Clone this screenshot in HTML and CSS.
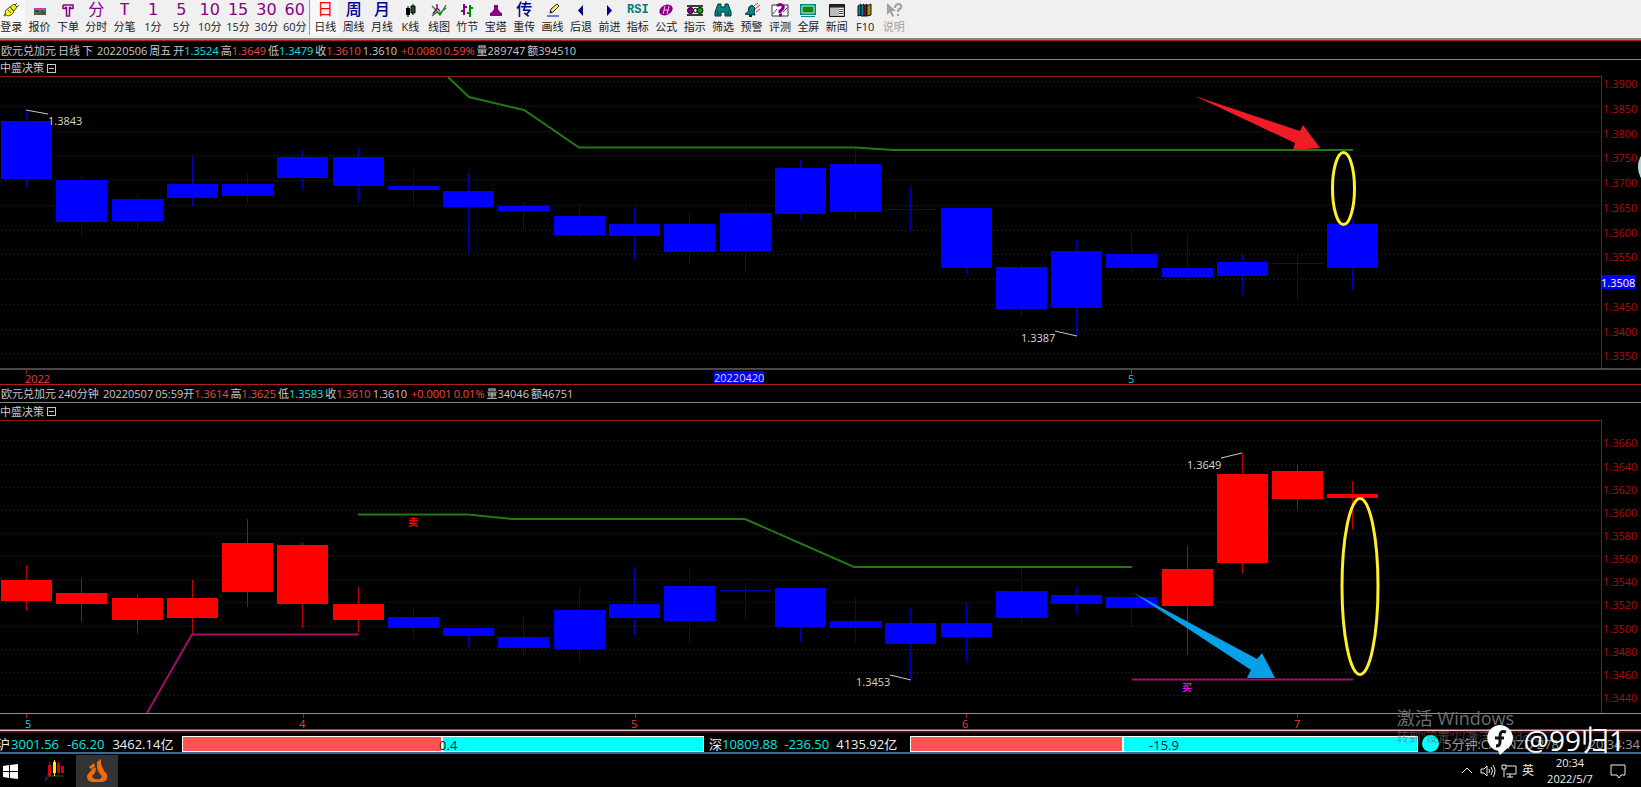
FILE: index.html
```html
<!DOCTYPE html>
<html lang="zh-CN">
<head>
<meta charset="utf-8">
<title>欧元兑加元</title>
<link rel="stylesheet" href="styles.css">
</head>
<body>
<nav class="toolbar">
  <div class="tools tools-period">
    <button class="tool tool-hot"><svg class="icon" viewBox="0 0 18 16"><path d="M2 14l3-3" stroke="#666" stroke-width="2"/><path d="M4 8l4-3 4 5-3 3-3 1-3-2z" fill="#ff0" stroke="#553"/><path d="M8 5l4-3 3 3-3 4z" fill="#ee0" stroke="#553"/><path d="M13 3l2-2M15 5l2-2M6 8l3 3" stroke="#553"/></svg>登录</button>
    <button class="tool"><svg class="icon" viewBox="0 0 18 16"><path d="M3 6h12v7H3z" fill="#555"/><path d="M3 6h12v2H3z" fill="#c3c"/><path d="M4 11h3l2-2 2 1 3-2" stroke="#2b2" fill="none"/><path d="M5 9l3 1M10 9l3 2" stroke="#222"/></svg>报价</button>
    <button class="tool"><svg class="icon" viewBox="0 0 18 16"><path d="M4 3h10v3.500h-2.500V4.500M4 3v3.500h2.500V4.500M7.500 5v9h3V5" fill="none" stroke="#808" stroke-width="1.500"/></svg>下单</button>
    <button class="tool"><span class="glyph">分</span>分时</button>
    <button class="tool"><span class="glyph glyph-serif">T</span>分笔</button>
    <button class="tool"><span class="glyph">1</span>1分</button>
    <button class="tool"><span class="glyph">5</span>5分</button>
    <button class="tool"><span class="glyph">10</span>10分</button>
    <button class="tool"><span class="glyph">15</span>15分</button>
    <button class="tool"><span class="glyph">30</span>30分</button>
    <button class="tool"><span class="glyph">60</span>60分</button>
  </div>
  <div class="tools tools-view">
    <button class="tool tool-hot"><span class="glyph red">日</span>日线</button>
    <button class="tool"><span class="glyph navy">周</span>周线</button>
    <button class="tool"><span class="glyph navy">月</span>月线</button>
    <button class="tool"><svg class="icon" viewBox="0 0 18 16"><path d="M7 4v11M12 2v11" stroke="#000"/><path d="M5 6h4v7H5z" fill="#000"/><path d="M10 4h4v7h-4z" fill="#252" stroke="#000"/></svg>K线</button>
    <button class="tool"><svg class="icon" viewBox="0 0 18 16"><path d="M2 4l4 4 4 5 6-10M2 14l5-4 3 1 6-5" fill="none" stroke="#282" stroke-width="1.4"/><path d="M3 12l4-6 3 3M7 2v5" fill="none" stroke="#808" stroke-width="1.4"/></svg>线图</button>
    <button class="tool"><svg class="icon" viewBox="0 0 18 16"><path d="M6 2v11M6 9H3M6 5h3" stroke="#808" stroke-width="2" fill="none"/><path d="M12 3v12M12 6h3M12 11H9" stroke="#080" stroke-width="2" fill="none"/></svg>竹节</button>
    <button class="tool"><svg class="icon" viewBox="0 0 18 16"><path d="M7 3h4v4l2 3 2 1v3H3v-3l2-1 2-3z" fill="#808"/></svg>宝塔</button>
    <button class="tool"><span class="glyph navy">传</span>重传</button>
    <button class="tool"><svg class="icon" viewBox="0 0 18 16"><path d="M6 11l1-4 6-5 2 2-6 6z" fill="#fe6" stroke="#222"/><path d="M6 11l2-1-1-1z" fill="#000"/><path d="M3 14h12" stroke="#44c" stroke-width="1.4"/></svg>画线</button>
    <button class="tool"><svg class="icon" viewBox="0 0 18 16"><path d="M11 3v11L6 8.500z" fill="#008"/></svg>后退</button>
    <button class="tool"><svg class="icon" viewBox="0 0 18 16"><path d="M7 3v11l5-5.500z" fill="#008"/></svg>前进</button>
    <button class="tool"><span class="glyph glyph-rsi">RSI</span>指标</button>
    <button class="tool"><svg class="icon" viewBox="0 0 18 16"><ellipse cx="9" cy="8" rx="7" ry="5" transform="rotate(-25 9 8)" fill="#808"/><path d="M8 4L6 12M12 4l-2 8M7 8h5" stroke="#fbf" fill="none"/></svg>公式</button>
    <button class="tool"><svg class="icon" viewBox="0 0 18 16"><path d="M1 4h16M1 13h16" stroke="#000" stroke-width="1.500"/><circle cx="4.500" cy="8.500" r="3" fill="#808" stroke="#000"/><circle cx="9.500" cy="8.500" r="2" fill="#fff" stroke="#000"/><circle cx="14" cy="8.500" r="3" fill="#0a0" stroke="#000"/></svg>指示</button>
    <button class="tool"><svg class="icon" viewBox="0 0 18 16"><path d="M4 2h3v3h4V2h3l3 8v4h-6v-4H7v4H1v-4z" fill="#088" stroke="#033"/><path d="M4 9v4M14 9v4" stroke="#033"/></svg>筛选</button>
    <button class="tool"><svg class="icon" viewBox="0 0 18 16"><path d="M2 12l3-2 1-5 3-2 3 3-1 4 1 3z" fill="#088" stroke="#033"/><path d="M6 14h3" stroke="#033" stroke-width="2"/><path d="M11 4l4-3M12 7l5-4M13 10l4-3" stroke="#e33"/></svg>预警</button>
    <button class="tool"><svg class="icon" viewBox="0 0 18 16"><path d="M1 3h16v11H1z" fill="#fff" stroke="#333"/><path d="M2 12l4-5M12 10l5-5" stroke="#44a"/><path d="M6 4q3-3 6 0 1 3-3 5v2M8 13h3" stroke="#808" stroke-width="3" fill="none"/></svg>评测</button>
    <button class="tool"><svg class="icon" viewBox="0 0 18 16"><path d="M1 2h16v11H1z" fill="#088"/><path d="M3 4h12v7H3z" fill="#181" stroke="#cec"/><path d="M2 14.500h14" stroke="#088"/></svg>全屏</button>
    <button class="tool"><svg class="icon" viewBox="0 0 18 16"><path d="M1.500 2.500h15v12h-15z" fill="#bbb" stroke="#111"/><path d="M2 4h14" stroke="#222" stroke-width="3"/><path d="M11 6h4v7h-4z" fill="#fff"/><path d="M11 7.500h4M11 9.500h4M11 11.500h4" stroke="#e00"/></svg>新闻</button>
    <button class="tool"><svg class="icon" viewBox="0 0 18 16"><g stroke="#111"><path d="M2 4l3-2v11l-3 1z" fill="#088"/><path d="M5 4l3-2v12H5z" fill="#08a"/><path d="M8 4l3-2v12H8z" fill="#a02"/><path d="M11 4l4-2v11l-4 1z" fill="#991"/></g></svg>F10</button>
    <button class="tool" disabled><svg class="icon" viewBox="0 0 18 16"><path d="M2 1v12l3-3 2 5 2-1-2-5h4z" fill="#a0a0a0"/><path d="M10 6q0-4 4-4 3 1 2 4-3 1-3 4M13 12v2" stroke="#a0a0a0" stroke-width="2" fill="none"/></svg>说明</button>
  </div>
</nav>

<main>
<section class="panel">
  <header class="quote">
    <span>欧元兑加元</span><span>日线</span><span>下</span><span class="change">20220506</span><span>周五</span>
    <span>开<b class="down">1.3524</b></span><span>高<b class="up">1.3649</b></span><span>低<b class="down">1.3479</b></span><span>收<b class="up">1.3610</b></span><span>1.3610</span>
    <span class="up change">+0.0080</span><span class="up">0.59%</span><span>量289747</span><span>额394510</span>
  </header>
  <div class="indicator">中盛决策 <button class="fold" aria-label="折叠"></button></div>
  <svg class="chart" id="daily" viewBox="0 76 1641 308">
    <g class="grid"></g>
    <path class="frame" d="M0 76.500H1601.500V369"/>
    <g class="candles"></g>
    <path class="sell-line" d="M448 77L469 97 524 110 579 147.500H855L893 150H1353"/>
    <path class="leader" d="M26 110L48 114M1055 331L1077 336"/>
    <text class="mark" x="48" y="125">1.3843</text>
    <text class="mark" x="1021" y="342">1.3387</text>
    <path class="arrow-red" d="M1195 96L1300 131 1303 125 1320 148 1293 150 1295 143z"/>
    <ellipse class="ring" cx="1343.500" cy="188.500" rx="11" ry="36"/>
    <ellipse cx="1646" cy="167" rx="8" ry="14" fill="#b5d8d4"/>
    <path class="base" d="M0 369H1641"/>
    <path class="tick" d="M26.500 370v4M1131.500 370v4"/>
    <text class="up-t" x="25" y="383">2022</text>
    <rect class="flag" x="714" y="371" width="50" height="12"/>
    <text class="mark" x="714" y="382">20220420</text>
    <text class="down-t" x="1128" y="383">5</text>
    <rect class="flag" x="1602" y="275" width="33" height="14"/>
    <text class="flag-t" x="1601" y="287">1.3508</text>
  </svg>
</section>

<section class="panel">
  <header class="quote">
    <span>欧元兑加元</span><span>240分钟</span><span class="change">20220507</span>
    <span>05:59开<b class="up">1.3614</b></span><span>高<b class="up">1.3625</b></span><span>低<b class="down">1.3583</b></span><span>收<b class="up">1.3610</b></span><span>1.3610</span>
    <span class="up change">+0.0001</span><span class="up">0.01%</span><span>量34046</span><span>额46751</span>
  </header>
  <div class="indicator">中盛决策 <button class="fold" aria-label="折叠"></button></div>
  <svg class="chart" id="h4" viewBox="0 420 1641 309">
    <g class="grid"></g>
    <path class="frame" d="M0 420.500H1601.500V713"/>
    <g class="candles"></g>
    <path class="sell-line" d="M358 514.500H468L512 519H745L854 567H1132"/>
    <path class="buy-line" d="M147 713L192 634.500H359M1132 679.500H1353"/>
    <path class="leader" d="M1221 458L1242 453M890 675L911 680"/>
    <text class="mark" x="1187" y="469">1.3649</text>
    <text class="mark" x="856" y="686">1.3453</text>
    <text class="sell-t" x="408" y="526">卖</text>
    <text class="buy-t" x="1182" y="691">买</text>
    <path class="arrow-blue" d="M1132 592L1257 659 1262 653 1275 678H1247L1251 670z"/>
    <ellipse class="ring" cx="1360" cy="586.500" rx="18" ry="88"/>
    <path class="base" d="M0 713.500H1641"/>
    <path class="tick" d="M26.500 714v4M303.500 714v4M635.500 714v4M966.500 714v4M1297.500 714v4"/>
    <text class="down-t" x="25" y="728">5</text>
    <text class="up-t" x="299" y="728">4</text>
    <text class="up-t" x="631" y="728">5</text>
    <text class="up-t" x="962" y="728">6</text>
    <text class="up-t" x="1294" y="728">7</text>
  </svg>
</section>
</main>

<footer class="status">
  <div class="index"><span class="market">沪</span><span class="down">3001.56</span><span class="down">-66.20</span><span>3462.14亿</span></div>
  <div class="meter meter-sh"><i class="bull"></i><i class="bear"></i><span class="meter-value">0.4</span></div>
  <div class="index index-sz"><span>深<b class="down">10809.88</b></span><span class="down">-236.50</span><span>4135.92亿</span></div>
  <div class="meter meter-sz"><i class="bull"></i><i class="bear"></i><span class="meter-value">-15.9</span></div>
  <div class="lamp"></div>
  <div class="ticker">5分钟:CADNZD 278</div>
  <div class="time">20:34:34</div>
  <div class="activate"><p>激活 Windows</p><small>转到"设置"以激活 Windows。</small></div>
  <div class="brand"><svg class="brand-logo" viewBox="0 0 28 32"><path d="M14 1a13 13 0 0 1 6 24.500L14 31l-2-4.200A13 13 0 0 1 14 1z" fill="#fff"/><path d="M20 8q-6-2-6 4v6q0 4-4 4M9 14h9" fill="none" stroke="#111" stroke-width="3"/></svg>@99归1</div>
</footer>

<div class="taskbar">
  <button class="task" aria-label="开始"><svg viewBox="0 0 16 16"><path d="M0 3l6-1v6H0zM7 2l8-1v7H7zM0 9h6v6l-6-1zM7 9h8v7l-8-1z" fill="#fff"/></svg></button>
  <button class="task task-k" aria-label="行情"><svg viewBox="0 0 20 22"><path d="M4 5h3v11H4zM13 4h3v8h-3zM17 6h3v7h-3z" fill="#d00"/><path d="M9 2h3v11H9z" fill="#fe0"/><path d="M5.500 2v15M14.500 2v12" stroke="#d00"/><path d="M10.500 0v16" stroke="#fe0"/><path d="M1 21l5-5h13" stroke="#0a0" stroke-dasharray="2 1" fill="none"/><path d="M1 19l3-4" stroke="#22c"/></svg></button>
  <button class="task task-on" aria-label="火焰"><svg viewBox="0 0 22 24"><path d="M11 3l4-3v5l3 7q4 3 3 7-1 4-6 4H6q-5-1-5-5 0-3 4-6l1-2 3-2 1 2-1 4q-3 2-3 4 2 3 8 2 3-2 1-4-3-3-4-7z" fill="#f86a08"/><path d="M3 8l5-4 1 3-4 3z" fill="#f86a08"/></svg></button>
  <div class="tray">
    <svg class="tray-icon" viewBox="0 0 16 16"><path d="M3 10l5-5 5 5"/></svg>
    <svg class="tray-icon" viewBox="0 0 16 16"><path d="M1 6h3l3-3v10l-3-3H1zM9 6q1 2 0 4M11 4q3 4 0 8M13 2q4 6 0 12"/></svg>
    <svg class="tray-icon" viewBox="0 0 16 16"><path d="M5 3h10v8H5M9 11v3M6 14h6M1 2h4v4H1zM3 6v8"/></svg>
    <span class="ime">英</span>
    <div class="clock"><span>20:34</span><span>2022/5/7</span></div>
    <svg class="tray-icon" viewBox="0 0 16 16"><path d="M1 2h14v10h-4l-2 3-2-3H1z"/></svg>
  </div>
</div>
<script src="charts.js"></script>
</body>
</html>
```
FILE: styles.css
```css
* { box-sizing: border-box; }
body { margin: 0; min-height: 100vh; display: flex; flex-direction: column; background: #000; color: #c8c8c8; font: 11px/16px "Open Sans", "Noto Sans CJK SC", sans-serif; overflow-x: hidden; }
button { font: inherit; color: inherit; border: 0; padding: 0; background: none; }
b { font-weight: 400; }
.up { color: #f04844; }
.down { color: #10e4e0; }

.toolbar { display: flex; height: 40px; background: #f0f0f0; border-bottom: 2px solid #858585; overflow: hidden; }
.tools { display: flex; flex: none; height: 35px; }
.tools-period { width: 313px; margin-left: -3px; border-right: 1px solid #a0a0a0; }
.tools-view { width: 597px; margin-left: 1px; }
.tool { flex: 1; display: flex; flex-direction: column; align-items: center; gap: 1px; padding-top: 2px; color: #222; line-height: 15px; white-space: nowrap; }
.tool-hot { background: #f8f8f8; }
.tool:disabled { color: #a0a0a0; }
.icon { width: 18px; height: 16px; }
.glyph { height: 16px; font: 16px/16px "DejaVu Sans", "Noto Sans CJK SC", sans-serif; color: #808; }
.glyph-serif { font-family: "DejaVu Sans Mono", monospace; }
.glyph-rsi { font: 700 12px/16px "Liberation Mono", monospace; color: #067a78; }
.red { color: #f00; }
.navy { color: #000090; font-weight: 500; }

.panel { border-top: 1px solid #b01c1c; }
.quote { display: flex; gap: 2px; height: 19px; padding: 2px 0 0 1px; line-height: 16px; border-bottom: 1px solid #858585; white-space: nowrap; }
.panel + .panel .quote { height: 18px; padding-top: 1px; }
.change { margin-left: 2px; }
.indicator { display: flex; align-items: center; gap: 3px; height: 16px; }
.panel + .panel .indicator { height: 17px; }
.fold { width: 9px; height: 9px; padding: 3px 1px; border: 1px solid #c8c8c8; }
.fold::after { content: ""; display: block; height: 1px; background: #c8c8c8; }

.chart { display: block; width: 100%; height: auto; font-size: 11px; overflow: visible; }
.chart path { fill: none; }
.frame { stroke: #8c1414; shape-rendering: crispEdges; }
.grid path { stroke: #6a1414; stroke-dasharray: 1 3; shape-rendering: crispEdges; }
.grid text { fill: #b00c0c; }
.candles { shape-rendering: crispEdges; }
.fall { fill: #00f; }
.rise { fill: #f00; }
.fall-wick { fill: #0000b4; }
.rise-wick { fill: #c00000; }
.sell-line { stroke: #237a12; stroke-width: 2; }
.buy-line { stroke: #a0106a; stroke-width: 2; }
.leader { stroke: #c8c8c8; }
.mark { fill: #d8d8cc; }
.base { stroke: #909090; stroke-width: 1; }
.tick { stroke: #a01818; }
.up-t { fill: #e04040; }
.down-t { fill: #20d0cc; }
.flag { fill: #00f; }
.flag-t { fill: #fff; }
.sell-t { fill: #f00; font-size: 10px; font-weight: 700; }
.buy-t { fill: #e010e0; font-size: 10px; font-weight: 700; }
.chart .arrow-red { fill: #ee1c25; }
.chart .arrow-blue { fill: #06a0e8; }
.ring { fill: none; stroke: #fff02a; stroke-width: 3; }

.status { position: relative; display: flex; align-items: center; height: 25px; border-top: 1px solid #e02020; border-bottom: 2px solid #3c6a9c; box-shadow: inset 0 1px #e8c8c8, inset 0 3px #4a0c0c; padding-top: 5px; font-size: 13px; line-height: 16px; white-space: nowrap; }
.index { display: flex; gap: 8px; width: 182px; flex: none; color: #f0f0f0; }
.index-sz { width: 206px; padding-left: 5px; gap: 7px; }
.market { margin: 0 -7px 0 -3px; }
.meter { position: relative; display: flex; height: 16px; border: 1px solid #fff; }
.meter-sh { flex: 522; }
.meter-sz { flex: 508; }
.bull { background: #ff5252; border-right: 2px solid #fff; }
.meter-sh .bull { width: 50%; }
.meter-sz .bull { width: 42%; }
.bear { flex: 1; background: #0ff; }
.meter-value { position: absolute; left: 50%; transform: translateX(-50%); top: 1px; color: #222; line-height: 15px; }
.meter-sh .meter-value { left: 51%; }
.lamp { flex: none; width: 17px; height: 17px; margin: 0 4px; border-radius: 50%; background: #0ff; }
.ticker { width: 142px; flex: none; border-left: 1px solid #5a1010; color: #999; }
.time { width: 56px; flex: none; padding-right: 1px; border-left: 1px solid #5a1010; text-align: right; color: #999; }
.activate { position: absolute; left: 85%; top: -23px; padding-left: 2px; color: #6e6e6e; }
.activate p { margin: 0; font-size: 18px; line-height: 22px; }
.activate small { display: block; font-size: 12px; line-height: 18px; opacity: .6; }
.brand { position: absolute; right: 16px; top: -8px; display: flex; align-items: center; gap: 10px; color: #fff; font-size: 28px; line-height: 36px; }
.brand-logo { width: 28px; height: 32px; }

.taskbar { flex: 1; min-height: 32px; display: flex; align-items: center; padding-top: 1px; color: #eee; }
.task { display: flex; align-items: center; justify-content: center; width: 21px; height: 32px; }
.task svg { width: 16px; height: 16px; }
.task-k { width: 42px; margin: 0 1px 0 12px; }
.task-k svg { width: 20px; height: 22px; }
.task-on { width: 42px; background: #333; }
.task-on svg { width: 22px; height: 24px; }
.tray { display: flex; align-items: center; gap: 5px; margin-left: auto; padding-right: 15px; }
.tray-icon { width: 16px; height: 16px; fill: none; stroke: #eee; stroke-width: 1; }
.ime { font-size: 12px; }
.clock { display: flex; flex-direction: column; align-items: center; width: 66px; padding-right: 4px; }
```
FILE: charts.js
```javascript
const NS = "http://www.w3.org/2000/svg";

function add(parent, name, attrs, text) {
  const el = document.createElementNS(NS, name);
  for (const key in attrs) el.setAttribute(key, attrs[key]);
  if (text) el.textContent = text;
  parent.appendChild(el);
}

// candles: [high, bodyTop, bodyBottom, low] in chart coordinates
function draw(id, firstLine, step, prices, candles, isRise) {
  const chart = document.getElementById(id);
  const grid = chart.querySelector(".grid");
  const group = chart.querySelector(".candles");
  prices.forEach((price, i) => {
    const y = Math.round(firstLine + i * step);
    add(grid, "path", { d: `M1 ${y + 0.5}H1605` });
    if (price) add(grid, "text", { x: 1603, y: y + 7 }, price);
  });
  candles.forEach(([high, top, bottom, low], i) => {
    const x = Math.round(26 + i * 55.27);
    const kind = isRise(i) ? "rise" : "fall";
    const thin = bottom - top < 2;
    add(group, "rect", { class: kind + "-wick", x, y: high, width: 1, height: low - high });
    add(group, "rect", { class: thin ? kind + "-wick" : kind, x: x - 25, y: top, width: 51, height: bottom - top });
  });
}

draw("daily", 81, 24.75,
  ["1.3900", "1.3850", "1.3800", "1.3750", "1.3700", "1.3650", "1.3600", "1.3550", "", "1.3450", "1.3400", "1.3350"],
  [[110,121,179,188],[175,180,222,237],[194,199,221,231],[156,184,198,206],[174,184,196,203],
   [150,157,178,190],[148,157,186,202],[170,186,190,201],[173,191,207,253],[202,206,211,230],
   [203,216,235,238],[207,224,236,260],[212,224,252,265],[207,213,251,272],[160,168,214,220],
   [149,164,212,220],[186,209,210,231],[208,208,268,274],[264,267,309,316],[240,251,308,336],
   [232,254,268,272],[234,268,277,282],[255,262,276,295],[255,263,264,301],[217,224,268,290]],
  () => false);

draw("h4", 440.4, 23.15,
  ["1.3660", "1.3640", "1.3620", "1.3600", "1.3580", "1.3560", "1.3540", "1.3520", "1.3500", "1.3480", "1.3460", "1.3440"],
  [[565,580,601,611],[578,593,604,622],[595,598,620,634],[580,598,618,635],[519,543,592,607],
   [543,545,604,628],[587,604,620,632],[608,617,628,638],[628,628,636,648],[616,637,648,656],
   [587,610,649,662],[567,604,618,635],[570,586,621,642],[583,590,591,618],[588,588,627,642],
   [598,621,628,642],[608,623,644,680],[603,623,637,662],[568,591,618,624],[587,595,604,614],
   [593,597,608,626],[546,569,606,655],[453,474,563,573],[464,471,499,509],[481,494,498,529]],
  i => i < 7 || i > 20);
```
